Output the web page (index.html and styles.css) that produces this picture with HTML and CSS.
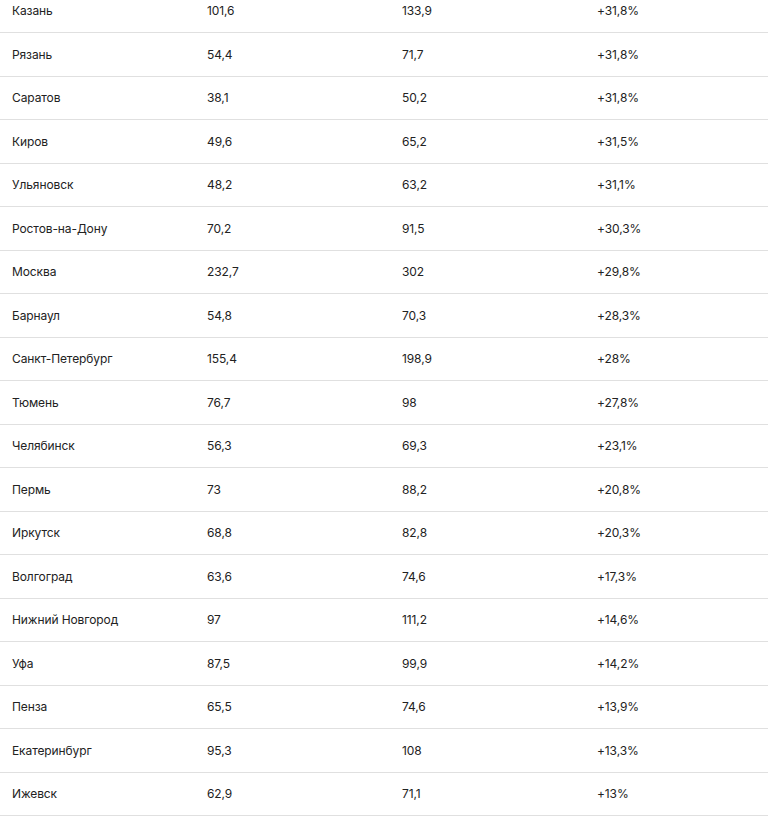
FILE: index.html
```html
<!DOCTYPE html>
<html lang="ru">
<head>
<meta charset="utf-8">
<link rel="stylesheet" href="styles.css">
</head>
<body>
<div class="table">
  <div class="row"><span>Казань</span><span>101,6</span><span>133,9</span><span>+31,8%</span></div>
  <div class="row"><span>Рязань</span><span>54,4</span><span>71,7</span><span>+31,8%</span></div>
  <div class="row"><span>Саратов</span><span>38,1</span><span>50,2</span><span>+31,8%</span></div>
  <div class="row"><span>Киров</span><span>49,6</span><span>65,2</span><span>+31,5%</span></div>
  <div class="row"><span>Ульяновск</span><span>48,2</span><span>63,2</span><span>+31,1%</span></div>
  <div class="row"><span>Ростов-на-Дону</span><span>70,2</span><span>91,5</span><span>+30,3%</span></div>
  <div class="row"><span>Москва</span><span>232,7</span><span>302</span><span>+29,8%</span></div>
  <div class="row"><span>Барнаул</span><span>54,8</span><span>70,3</span><span>+28,3%</span></div>
  <div class="row"><span>Санкт-Петербург</span><span>155,4</span><span>198,9</span><span>+28%</span></div>
  <div class="row"><span>Тюмень</span><span>76,7</span><span>98</span><span>+27,8%</span></div>
  <div class="row"><span>Челябинск</span><span>56,3</span><span>69,3</span><span>+23,1%</span></div>
  <div class="row"><span>Пермь</span><span>73</span><span>88,2</span><span>+20,8%</span></div>
  <div class="row"><span>Иркутск</span><span>68,8</span><span>82,8</span><span>+20,3%</span></div>
  <div class="row"><span>Волгоград</span><span>63,6</span><span>74,6</span><span>+17,3%</span></div>
  <div class="row"><span>Нижний Новгород</span><span>97</span><span>111,2</span><span>+14,6%</span></div>
  <div class="row"><span>Уфа</span><span>87,5</span><span>99,9</span><span>+14,2%</span></div>
  <div class="row"><span>Пенза</span><span>65,5</span><span>74,6</span><span>+13,9%</span></div>
  <div class="row"><span>Екатеринбург</span><span>95,3</span><span>108</span><span>+13,3%</span></div>
  <div class="row"><span>Ижевск</span><span>62,9</span><span>71,1</span><span>+13%</span></div>
</div>
</body>
</html>
```
FILE: styles.css
```css
html, body {
  margin: 0;
  padding: 0;
  background: #ffffff;
  overflow: hidden;
}
body {
  font-family: Inter, "Noto Sans", sans-serif;
  font-size: 12px;
  letter-spacing: -0.1px;
  color: #222222;
}
.table {
  margin-top: -10.5px;
  width: 768px;
}
.row {
  display: grid;
  grid-template-columns: 195px 195px 195px 1fr;
  height: 43.5px;
  box-sizing: border-box;
  border-bottom: 1px solid #e0e0e0;
  align-items: center;
}
.row span {
  padding-left: 12px;
  padding-top: 1px;
  line-height: 16px;
}
```
